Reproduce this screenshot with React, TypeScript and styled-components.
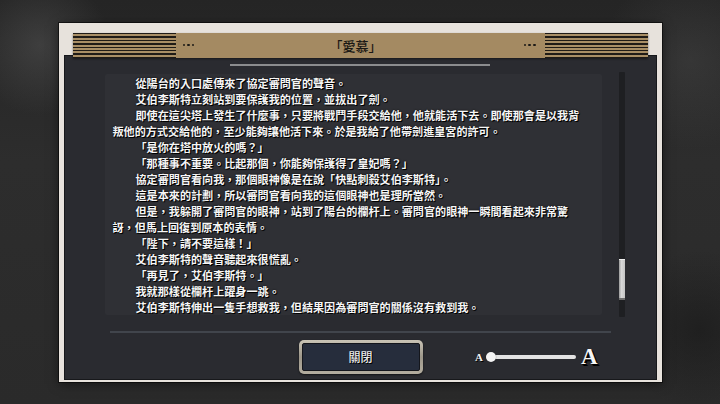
import styled, { createGlobalStyle } from "styled-components";

const lines: { text: string; indent?: boolean }[] = [
  { text: "從陽台的入口處傳來了協定審問官的聲音。", indent: true },
  { text: "艾伯李斯特立刻站到要保護我的位置，並拔出了劍。", indent: true },
  {
    text: "即使在這尖塔上發生了什麼事，只要將戰鬥手段交給他，他就能活下去。即使那會是以我背",
    indent: true,
  },
  { text: "叛他的方式交給他的，至少能夠讓他活下來。於是我給了他帶劍進皇宮的許可。" },
  { text: "「是你在塔中放火的嗎？」", indent: true },
  { text: "「那種事不重要。比起那個，你能夠保護得了皇妃嗎？」", indent: true },
  { text: "協定審問官看向我，那個眼神像是在說「快點刺殺艾伯李斯特」。", indent: true },
  { text: "這是本來的計劃，所以審問官看向我的這個眼神也是理所當然。", indent: true },
  {
    text: "但是，我躲開了審問官的眼神，站到了陽台的欄杆上。審問官的眼神一瞬間看起來非常驚",
    indent: true,
  },
  { text: "訝，但馬上回復到原本的表情。" },
  { text: "「陛下，請不要這樣！」", indent: true },
  { text: "艾伯李斯特的聲音聽起來很慌亂。", indent: true },
  { text: "「再見了，艾伯李斯特。」", indent: true },
  { text: "我就那樣從欄杆上躍身一跳。", indent: true },
  { text: "艾伯李斯特伸出一隻手想救我，但結果因為審問官的關係沒有救到我。", indent: true },
];

const App = () => {
  // scroll position of the log, 0..1
  const scroll = 0.77;
  return (
    <>
      <GlobalStyle />
      <Screen>
        <Frame>
          <Header>
            <Stripes />
            <Dots>
              <i />
              <i />
              <i />
            </Dots>
            <Title>「愛慕」</Title>
            <Dots>
              <i />
              <i />
              <i />
            </Dots>
            <Stripes $right />
          </Header>
          <Panel>
            <TopRule />
            <LogRow>
              <LogText>
                {lines.map((line, i) => (
                  <Line key={i} $indent={line.indent || false}>
                    {line.text}
                  </Line>
                ))}
              </LogText>
              <ScrollTrack>
                <ScrollThumb style={{ marginTop: `${scroll * 244}px` }} />
              </ScrollTrack>
            </LogRow>
            <Divider />
            <Footer>
              <span />
              <CloseButton>
                <span>關閉</span>
              </CloseButton>
              <SizeSlider>
                <SmallA>A</SmallA>
                <Track>
                  <Knob />
                </Track>
                <BigA>A</BigA>
              </SizeSlider>
            </Footer>
          </Panel>
        </Frame>
      </Screen>
    </>
  );
};

const GlobalStyle = createGlobalStyle`
  html, body {
    margin: 0;
    padding: 0;
    background: #2b2b2b;
  }
  * {
    box-sizing: border-box;
  }
`;

const Screen = styled.main`
  width: 720px;
  height: 404px;
  display: flex;
  align-items: center;
  justify-content: center;
  overflow: hidden;
  background:
    radial-gradient(circle at 40px 45px, rgba(90, 90, 90, 0.45), transparent 70px),
    radial-gradient(circle at 690px 60px, rgba(80, 80, 80, 0.35), transparent 90px),
    radial-gradient(circle at 700px 330px, rgba(20, 20, 20, 0.5), transparent 80px),
    linear-gradient(#252525, #2d2d2d 40%, #2a2a2a);
`;

const Frame = styled.section`
  width: 603px;
  height: 359px;
  display: flex;
  flex-direction: column;
  padding: 0 5px 4px 5px;
  background: #e7e2dc;
  box-shadow: 0 0 0 1px rgba(0, 0, 0, 0.55), 0 2px 10px rgba(0, 0, 0, 0.5);
`;

const Header = styled.header`
  position: relative;
  z-index: 1;
  height: 25px;
  margin: 10px 9px -3px 9px;
  display: flex;
  align-items: center;
  background: #a48a62;
  box-shadow: 0 1px 2px rgba(0, 0, 0, 0.45);
`;

const Stripes = styled.div<{ $right?: boolean }>`
  width: 103px;
  height: 100%;
  margin-left: ${({ $right }) => ($right ? "9px" : "0")};
  background: repeating-linear-gradient(
    to bottom,
    #1f1b16 0 1.3px,
    #a88e65 1.3px 3.4px
  );
`;

const Dots = styled.div`
  display: flex;
  gap: 2px;
  margin-left: 7px;

  i {
    width: 2.6px;
    height: 2.6px;
    border-radius: 50%;
    background: #1c1a17;
  }
`;

const Title = styled.h1`
  flex: 1;
  margin: 0;
  text-align: center;
  font: 500 13px/25px "Noto Sans CJK TC", "Noto Sans CJK JP", sans-serif;
  color: #1a1814;
`;

const Panel = styled.div`
  flex: 1;
  display: flex;
  flex-direction: column;
  padding: 8px 30px 5px 40px;
  background: #2a2b30;
  border: 1px solid #17181b;
`;

const TopRule = styled.div`
  align-self: center;
  width: 260px;
  height: 2px;
  margin-left: -10px;
  background: #8b8c8e;
`;

const LogRow = styled.div`
  margin-top: 6px;
  height: 245px;
  display: flex;
  gap: 20px;
`;

const LogText = styled.div`
  width: 497px;
  height: 241px;
  margin-top: 2px;
  padding: 1px 0 0 8px;
  overflow: hidden;
  background: #2f3035;
  border-radius: 2px;
`;

const Line = styled.p<{ $indent: boolean }>`
  margin: 0;
  padding-left: ${({ $indent }) => ($indent ? "23px" : "0")};
  white-space: nowrap;
  font: 700 11.1px/16px "Noto Sans CJK TC", "Noto Sans CJK JP", sans-serif;
  color: #f6f6f6;
  text-shadow: 1px 1px 0 #000, 0 0 2px #000;
`;

const ScrollTrack = styled.div`
  width: 6px;
  height: 245px;
  margin-left: -3px;
  display: flex;
  flex-direction: column;
  background: #1e1f22;
  border-radius: 1px;
`;

const ScrollThumb = styled.div`
  height: 41px;
  background: linear-gradient(to right, #9a9a9a, #d8d8d8 40%, #c4c4c4);
  border-top: 1px solid #eee;
  border-bottom: 2px solid #6d6d6d;
`;

const Divider = styled.div`
  height: 2px;
  margin: 14px 15px 0 5px;
  background: #41454c;
`;

const Footer = styled.div`
  height: 34px;
  margin: 7px 9px 0 0;
  display: grid;
  grid-template-columns: 1fr auto 1fr;
  align-items: center;
`;

const CloseButton = styled.button`
  width: 124px;
  height: 34px;
  padding: 3px;
  border: none;
  border-radius: 5px;
  background: linear-gradient(#c9c4b6, #9d978a 50%, #b3ad9f);
  box-shadow: 0 1px 2px rgba(0, 0, 0, 0.6);
  cursor: pointer;

  span {
    display: flex;
    align-items: center;
    justify-content: center;
    height: 100%;
    border: 1px solid #14161c;
    border-radius: 2px;
    background: #262d3c;
    font: 500 12px "Noto Sans CJK TC", "Noto Sans CJK JP", sans-serif;
    color: #e8e8e8;
    text-shadow: 1px 1px 0 #000;
  }
`;

const SizeSlider = styled.div`
  justify-self: end;
  margin-right: 19px;
  display: flex;
  align-items: center;
`;

const SmallA = styled.span`
  font: 700 11px "Liberation Serif", "DejaVu Serif", serif;
  color: #f2f2f2;
  text-shadow: 1px 1px 0 #000;
  margin-right: 3px;
`;

const Track = styled.div`
  width: 90px;
  height: 4px;
  display: flex;
  align-items: center;
  border-radius: 2px;
  background: #e3e3e3;
`;

const Knob = styled.div`
  width: 10px;
  height: 10px;
  border-radius: 50%;
  background: #f4f4f4;
  box-shadow: 0 0 1px rgba(0, 0, 0, 0.6);
`;

const BigA = styled.span`
  margin-left: 5px;
  font: 700 23px "Liberation Serif", "DejaVu Serif", serif;
  color: #f6f6f6;
  text-shadow: 1px 1px 0 #000, 2px 2px 0 #000;
`;

export default App;
